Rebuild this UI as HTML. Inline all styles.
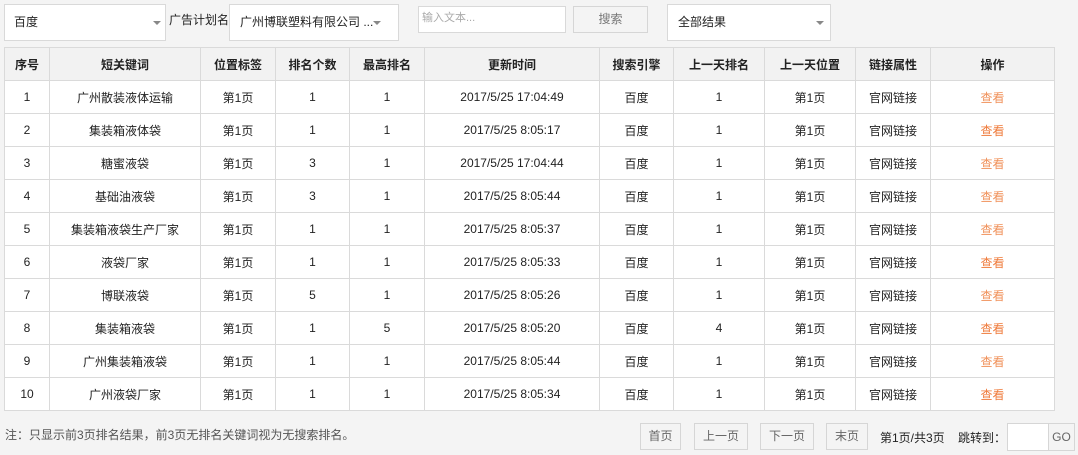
<!DOCTYPE html>
<html><head><meta charset="utf-8"><style>
*{box-sizing:border-box;margin:0;padding:0}
body{width:1078px;height:455px;background:#f4f4f4;font-family:"Liberation Sans","Noto Sans CJK SC",sans-serif;font-size:12px;color:#222;position:relative;overflow:hidden}
.a{position:absolute}
.sel{background:#fff;border:1px solid #d9d9d9;height:37px;line-height:35px;padding-left:9px;font-size:12px;color:#222}
.arr{position:absolute;width:0;height:0;border-left:4px solid transparent;border-right:4px solid transparent;border-top:4px solid #888;top:16px}
table{position:absolute;left:4px;top:47px;width:1050px;table-layout:fixed;border-collapse:collapse;background:#fff}
td,th{border:1px solid #dadada;text-align:center;height:33px;font-size:12px;padding:0}
th{background:#f2f2f2;font-weight:bold;color:#222}
.l1{color:#f0915a}.l2{color:#ef7a3a}
.btn{position:absolute;top:423px;height:27px;line-height:25px;border:1px solid #d6d6d6;background:#f4f4f4;color:#666;text-align:center;font-size:12px}
</style></head><body>
<div class="a sel" style="left:4px;top:4px;width:162px">百度<div class="arr" style="left:148px"></div></div>
<div class="a" style="left:169px;top:11px;font-size:12px">广告计划名称</div>
<div class="a sel" style="left:229px;top:4px;width:170px;padding-left:10px">广州博联塑料有限公司 ...<div class="arr" style="left:143px"></div></div>
<div class="a" style="left:418px;top:6px;width:148px;height:27px;background:#fff;border:1px solid #d9d9d9;color:#aaa;font-size:11px;line-height:22px;padding-left:3px">输入文本...</div>
<div class="a" style="left:573px;top:6px;width:75px;height:27px;border:1px solid #d6d6d6;color:#777;text-align:center;line-height:25px">搜索</div>
<div class="a sel" style="left:667px;top:4px;width:164px;padding-left:10px">全部结果<div class="arr" style="left:148px"></div></div>
<table>
<colgroup><col style="width:45px"><col style="width:151px"><col style="width:75px"><col style="width:74px"><col style="width:75px"><col style="width:175px"><col style="width:74px"><col style="width:91px"><col style="width:91px"><col style="width:75px"><col style="width:124px"></colgroup>
<tr><th>序号</th><th>短关键词</th><th>位置标签</th><th>排名个数</th><th>最高排名</th><th>更新时间</th><th>搜索引擎</th><th>上一天排名</th><th>上一天位置</th><th>链接属性</th><th>操作</th></tr>
<tr><td>1</td><td>广州散装液体运输</td><td>第1页</td><td>1</td><td>1</td><td>2017/5/25 17:04:49</td><td>百度</td><td>1</td><td>第1页</td><td>官网链接</td><td class="l1">查看</td></tr>
<tr><td>2</td><td>集装箱液体袋</td><td>第1页</td><td>1</td><td>1</td><td>2017/5/25 8:05:17</td><td>百度</td><td>1</td><td>第1页</td><td>官网链接</td><td class="l2">查看</td></tr>
<tr><td>3</td><td>糖蜜液袋</td><td>第1页</td><td>3</td><td>1</td><td>2017/5/25 17:04:44</td><td>百度</td><td>1</td><td>第1页</td><td>官网链接</td><td class="l1">查看</td></tr>
<tr><td>4</td><td>基础油液袋</td><td>第1页</td><td>3</td><td>1</td><td>2017/5/25 8:05:44</td><td>百度</td><td>1</td><td>第1页</td><td>官网链接</td><td class="l1">查看</td></tr>
<tr><td>5</td><td>集装箱液袋生产厂家</td><td>第1页</td><td>1</td><td>1</td><td>2017/5/25 8:05:37</td><td>百度</td><td>1</td><td>第1页</td><td>官网链接</td><td class="l1">查看</td></tr>
<tr><td>6</td><td>液袋厂家</td><td>第1页</td><td>1</td><td>1</td><td>2017/5/25 8:05:33</td><td>百度</td><td>1</td><td>第1页</td><td>官网链接</td><td class="l2">查看</td></tr>
<tr><td>7</td><td>博联液袋</td><td>第1页</td><td>5</td><td>1</td><td>2017/5/25 8:05:26</td><td>百度</td><td>1</td><td>第1页</td><td>官网链接</td><td class="l1">查看</td></tr>
<tr><td>8</td><td>集装箱液袋</td><td>第1页</td><td>1</td><td>5</td><td>2017/5/25 8:05:20</td><td>百度</td><td>4</td><td>第1页</td><td>官网链接</td><td class="l2">查看</td></tr>
<tr><td>9</td><td>广州集装箱液袋</td><td>第1页</td><td>1</td><td>1</td><td>2017/5/25 8:05:44</td><td>百度</td><td>1</td><td>第1页</td><td>官网链接</td><td class="l1">查看</td></tr>
<tr><td>10</td><td>广州液袋厂家</td><td>第1页</td><td>1</td><td>1</td><td>2017/5/25 8:05:34</td><td>百度</td><td>1</td><td>第1页</td><td>官网链接</td><td class="l2">查看</td></tr>
</table>
<div class="a" style="left:5px;top:426px;color:#555;font-size:12px">注：只显示前3页排名结果，前3页无排名关键词视为无搜索排名。</div>
<div class="btn" style="left:640px;width:41px">首页</div>
<div class="btn" style="left:694px;width:54px">上一页</div>
<div class="btn" style="left:760px;width:54px">下一页</div>
<div class="btn" style="left:826px;width:42px">末页</div>
<div class="a" style="left:880px;top:429px;color:#222">第1页/共3页</div>
<div class="a" style="left:958px;top:429px;color:#222">跳转到：</div>
<div class="a" style="left:1007px;top:423px;width:42px;height:28px;background:#fff;border:1px solid #d6d6d6"></div>
<div class="a" style="left:1048px;top:423px;width:27px;height:28px;border:1px solid #d6d6d6;color:#666;line-height:26px;text-align:center;background:#f4f4f4">GO</div>
</body></html>
